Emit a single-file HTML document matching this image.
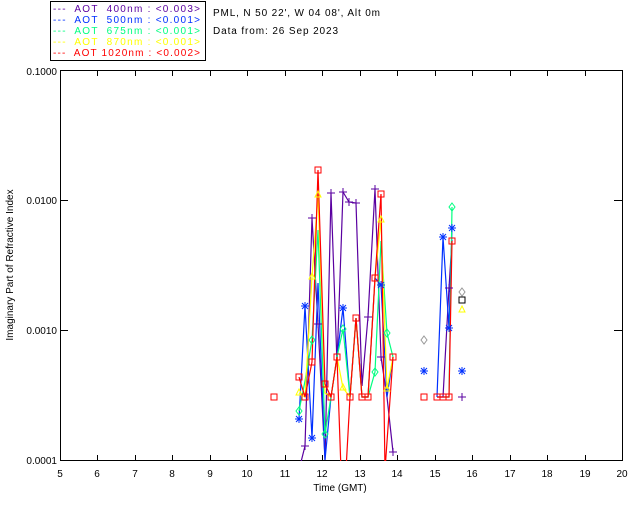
<!DOCTYPE html>
<html><head><style>body{margin:0;background:#fff}svg{display:block}text{font-family:"Liberation Sans",sans-serif;font-size:10px}</style></head><body>
<svg width="640" height="512" viewBox="0 0 640 512">
<defs><clipPath id="c"><rect x="60" y="70" width="562" height="391"/></clipPath></defs>
<rect x="50.5" y="1.5" width="155" height="59" fill="#fff" stroke="#000"/>
<g font-size="11">
<text x="53" y="12" fill="#5a00a0" textLength="147" lengthAdjust="spacing" xml:space="preserve">---  AOT  400nm : &lt;0.003&gt;</text>
<text x="53" y="23" fill="#0030ff" textLength="147" lengthAdjust="spacing" xml:space="preserve">---  AOT  500nm : &lt;0.001&gt;</text>
<text x="53" y="34" fill="#00ff80" textLength="147" lengthAdjust="spacing" xml:space="preserve">---  AOT  675nm : &lt;0.001&gt;</text>
<text x="53" y="45" fill="#ffff00" textLength="147" lengthAdjust="spacing" xml:space="preserve">---  AOT  870nm : &lt;0.001&gt;</text>
<text x="53" y="56" fill="#ff0000" textLength="147" lengthAdjust="spacing" xml:space="preserve">---  AOT 1020nm : &lt;0.002&gt;</text>
</g>
<text x="213" y="16" font-size="11" textLength="167" lengthAdjust="spacing">PML, N 50 22', W 04 08', Alt 0m</text>
<text x="213" y="34" font-size="11" textLength="125" lengthAdjust="spacing">Data from: 26 Sep 2023</text>
<rect x="60.5" y="70.5" width="562" height="390" fill="none" stroke="#000"/>
<g stroke="#000">
<path d="M97.5 461v-6M135.5 461v-6M172.5 461v-6M210.5 461v-6M247.5 461v-6M285.5 461v-6M322.5 461v-6M360.5 461v-6M397.5 461v-6M435.5 461v-6M472.5 461v-6M510.5 461v-6M547.5 461v-6M585.5 461v-6"/>
<path d="M97.5 70v6M135.5 70v6M172.5 70v6M210.5 70v6M247.5 70v6M285.5 70v6M322.5 70v6M360.5 70v6M397.5 70v6M435.5 70v6M472.5 70v6M510.5 70v6M547.5 70v6M585.5 70v6"/>
<path d="M60 200.5h8M60 330.5h8M622 200.5h-8M622 330.5h-8"/>
</g>
<g text-anchor="middle">
<text x="60" y="477">5</text><text x="97" y="477">6</text><text x="135" y="477">7</text><text x="172" y="477">8</text><text x="210" y="477">9</text><text x="247" y="477">10</text><text x="285" y="477">11</text><text x="322" y="477">12</text><text x="360" y="477">13</text><text x="397" y="477">14</text><text x="435" y="477">15</text><text x="472" y="477">16</text><text x="510" y="477">17</text><text x="547" y="477">18</text><text x="585" y="477">19</text><text x="622" y="477">20</text>
<text x="340" y="491">Time (GMT)</text>
</g>
<g text-anchor="end">
<text x="57" y="75">0.1000</text><text x="57" y="204">0.0100</text><text x="57" y="334">0.0010</text><text x="57" y="464">0.0001</text>
</g>
<text transform="translate(13 265) rotate(-90)" text-anchor="middle">Imaginary Part of Refractive Index</text>
<g fill="none" stroke-width="1.2" clip-path="url(#c)">
<polyline stroke="#5a00a0" points="299,470 305,446 312,218 318,324 325,460 331,193 337,363 343,192 349,202 356,203 362,386 368,317 375,189 381,357 387,397 393,452"/>
<polyline stroke="#5a00a0" points="437,397 443,397 449,288 452,240"/>
<polyline stroke="#0030ff" points="299,419 305,306 312,438 318,283 325,460 331,397 337,357 343,308 350,397 356,318 362,397 368,397 375,278 381,285 387,397 393,357"/>
<polyline stroke="#0030ff" points="437,397 443,237 449,328 452,228"/>
<polyline stroke="#00ff80" points="299,411 305,381 312,340 318,230 325,434 331,397 337,357 343,329 350,397 356,318 362,397 368,397 375,372 381,241 387,333 393,357"/>
<polyline stroke="#00ff80" points="443,397 449,397 452,207"/>
<polyline stroke="#ffff00" points="299,393 305,397 312,277 318,195 325,393 331,397 337,357 343,388 350,397 356,318 362,397 368,397 375,278 381,220 387,389 393,357"/>
<polyline stroke="#ff0000" points="299,377 305,397 312,362 318,170 325,384 331,397 337,357 341,470 346,470 350,397 356,318 362,397 368,397 375,278 381,194 385,470 393,357"/>
<polyline stroke="#ff0000" points="437,397 443,397 449,397 452,241"/>
</g>
<g fill="none" stroke-width="1">
<g stroke="#5a00a0"><path d="M301 446h8M305 442v8M308 218h8M312 214v8M314 324h8M318 320v8M327 193h8M331 189v8M339 192h8M343 188v8M345 202h8M349 198v8M352 203h8M356 199v8M371 189h8M375 185v8M377 357h8M381 353v8M389 452h8M393 448v8M445 288h8M449 284v8M458 397h8M462 393v8M364 317h8M368 313v8"/></g>
<g stroke="#0030ff"><path d="M295 419h8M299 415v8M296 416l6 6M302 416l-6 6M301 306h8M305 302v8M302 303l6 6M308 303l-6 6M308 438h8M312 434v8M309 435l6 6M315 435l-6 6M339 308h8M343 304v8M340 305l6 6M346 305l-6 6M377 285h8M381 281v8M378 282l6 6M384 282l-6 6M420 371h8M424 367v8M421 368l6 6M427 368l-6 6M439 237h8M443 233v8M440 234l6 6M446 234l-6 6M448 228h8M452 224v8M449 225l6 6M455 225l-6 6M445 328h8M449 324v8M446 325l6 6M452 325l-6 6M458 371h8M462 367v8M459 368l6 6M465 368l-6 6"/></g>
<g stroke="#00ff80"><path d="M299 407l3 4-3 4-3-4zM312 336l3 4-3 4-3-4zM325 430l3 4-3 4-3-4zM343 325l3 4-3 4-3-4zM375 368l3 4-3 4-3-4zM387 329l3 4-3 4-3-4zM452 203l3 4-3 4-3-4z"/></g>
<path stroke="#999" d="M424 336l3 4-3 4-3-4zM462 288l3 4-3 4-3-4z"/>
<g stroke="#ffff00"><path d="M299 389l3 6h-6zM312 273l3 6h-6zM318 191l3 6h-6zM343 384l3 6h-6zM381 216l3 6h-6zM387 385l3 6h-6zM462 306l3 6h-6z"/></g>
<g stroke="#ff0000"><path d="M271 394h6v6h-6zM296 374h6v6h-6zM302 394h6v6h-6zM309 359h6v6h-6zM315 167h6v6h-6zM322 381h6v6h-6zM328 394h6v6h-6zM334 354h6v6h-6zM347 394h6v6h-6zM353 315h6v6h-6zM359 394h6v6h-6zM365 394h6v6h-6zM372 275h6v6h-6zM378 191h6v6h-6zM390 354h6v6h-6zM421 394h6v6h-6zM434 394h6v6h-6zM440 394h6v6h-6zM446 394h6v6h-6zM449 238h6v6h-6z"/></g>
<path stroke="#000" d="M459 297h6v6h-6z"/>
</g>
</svg>
</body></html>
